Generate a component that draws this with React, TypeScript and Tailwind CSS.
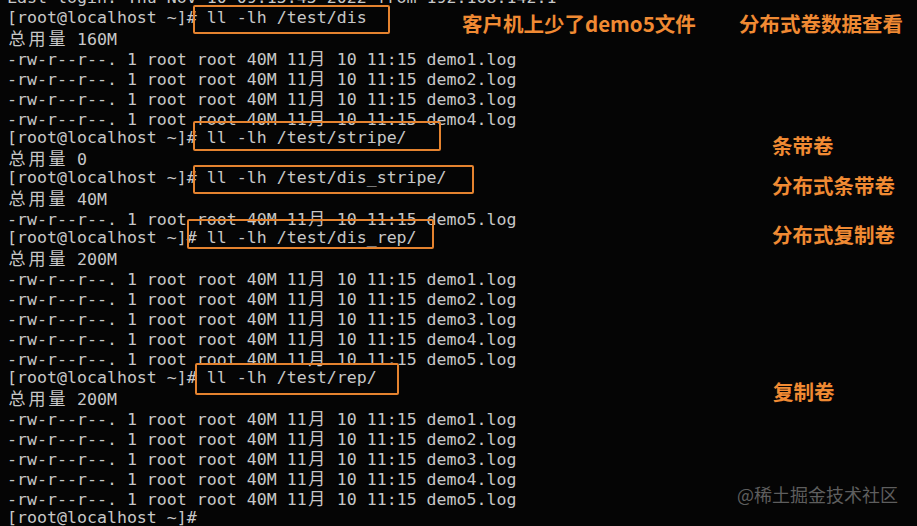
const lines = [
  "Last login: Thu Nov 10 09:15:45 2022 from 192.168.142.1",
  "[root@localhost ~]# ll -lh /test/dis",
  "总用量 160M",
  "-rw-r--r--. 1 root root 40M 11月 10 11:15 demo1.log",
  "-rw-r--r--. 1 root root 40M 11月 10 11:15 demo2.log",
  "-rw-r--r--. 1 root root 40M 11月 10 11:15 demo3.log",
  "-rw-r--r--. 1 root root 40M 11月 10 11:15 demo4.log",
  "[root@localhost ~]# ll -lh /test/stripe/",
  "总用量 0",
  "[root@localhost ~]# ll -lh /test/dis_stripe/",
  "总用量 40M",
  "-rw-r--r--. 1 root root 40M 11月 10 11:15 demo5.log",
  "[root@localhost ~]# ll -lh /test/dis_rep/",
  "总用量 200M",
  "-rw-r--r--. 1 root root 40M 11月 10 11:15 demo1.log",
  "-rw-r--r--. 1 root root 40M 11月 10 11:15 demo2.log",
  "-rw-r--r--. 1 root root 40M 11月 10 11:15 demo3.log",
  "-rw-r--r--. 1 root root 40M 11月 10 11:15 demo4.log",
  "-rw-r--r--. 1 root root 40M 11月 10 11:15 demo5.log",
  "[root@localhost ~]# ll -lh /test/rep/",
  "总用量 200M",
  "-rw-r--r--. 1 root root 40M 11月 10 11:15 demo1.log",
  "-rw-r--r--. 1 root root 40M 11月 10 11:15 demo2.log",
  "-rw-r--r--. 1 root root 40M 11月 10 11:15 demo3.log",
  "-rw-r--r--. 1 root root 40M 11月 10 11:15 demo4.log",
  "-rw-r--r--. 1 root root 40M 11月 10 11:15 demo5.log",
  "[root@localhost ~]#",
]

// cjk chars take two terminal cells
function TermLine({ text }: { text: string }) {
  const parts: { s: string; wide: boolean }[] = []
  for (const ch of text) {
    const wide = ch.charCodeAt(0) > 0x2e80
    const last = parts[parts.length - 1]
    if (!wide && last && !last.wide) last.s += ch
    else parts.push({ s: ch, wide })
  }
  return (
    <div className="h-[20px] leading-[20px] whitespace-pre">
      {parts.map((p, i) =>
        p.wide ? (
          <span key={i} className="inline-block w-[20px] text-center text-[17px] font-['Noto_Sans_CJK_SC',sans-serif]">
            {p.s}
          </span>
        ) : (
          <span key={i}>{p.s}</span>
        )
      )}
    </div>
  )
}

const boxes = [
  "left-[193px] top-[5px] w-[197px] h-[29px]",
  "left-[193px] top-[121px] w-[248px] h-[30px]",
  "left-[193px] top-[165px] w-[281px] h-[29px]",
  "left-[187px] top-[219px] w-[247px] h-[30px]",
  "left-[195px] top-[363px] w-[204px] h-[32px]",
]

const notes = [
  { t: "客户机上少了demo5文件", c: "left-[462px] top-[13px]" },
  { t: "分布式卷数据查看", c: "left-[739px] top-[13px]" },
  { t: "条带卷", c: "left-[772px] top-[135px]" },
  { t: "分布式条带卷", c: "left-[772px] top-[175px]" },
  { t: "分布式复制卷", c: "left-[772px] top-[224px]" },
  { t: "复制卷", c: "left-[773px] top-[381px]" },
]

export default function App() {
  return (
    <div className="relative w-[917px] h-[526px] overflow-hidden bg-[#050505]">
      <div className="-mt-[12px] pl-[7px] text-[16.6px] text-[#c8c8c8] font-['DejaVu_Sans_Mono','Noto_Sans_CJK_SC',monospace]">
        {lines.map((l, i) => (
          <TermLine key={i} text={l} />
        ))}
      </div>
      {boxes.map((b, i) => (
        <div key={i} className={"absolute border-2 border-[#e5832f] rounded-[2px] " + b} />
      ))}
      {notes.map((n, i) => (
        <div
          key={i}
          className={"absolute text-[20.5px] leading-none font-bold text-[#f08a33] whitespace-nowrap font-['Noto_Sans_CJK_SC','Noto_Sans',sans-serif] " + n.c}
        >
          {n.t}
        </div>
      ))}
      <div className="absolute left-[737px] top-[485px] text-[18px] leading-none text-[#5e5e5e] whitespace-nowrap font-['Noto_Sans_CJK_SC',sans-serif]">
        @稀土掘金技术社区
      </div>
    </div>
  )
}
